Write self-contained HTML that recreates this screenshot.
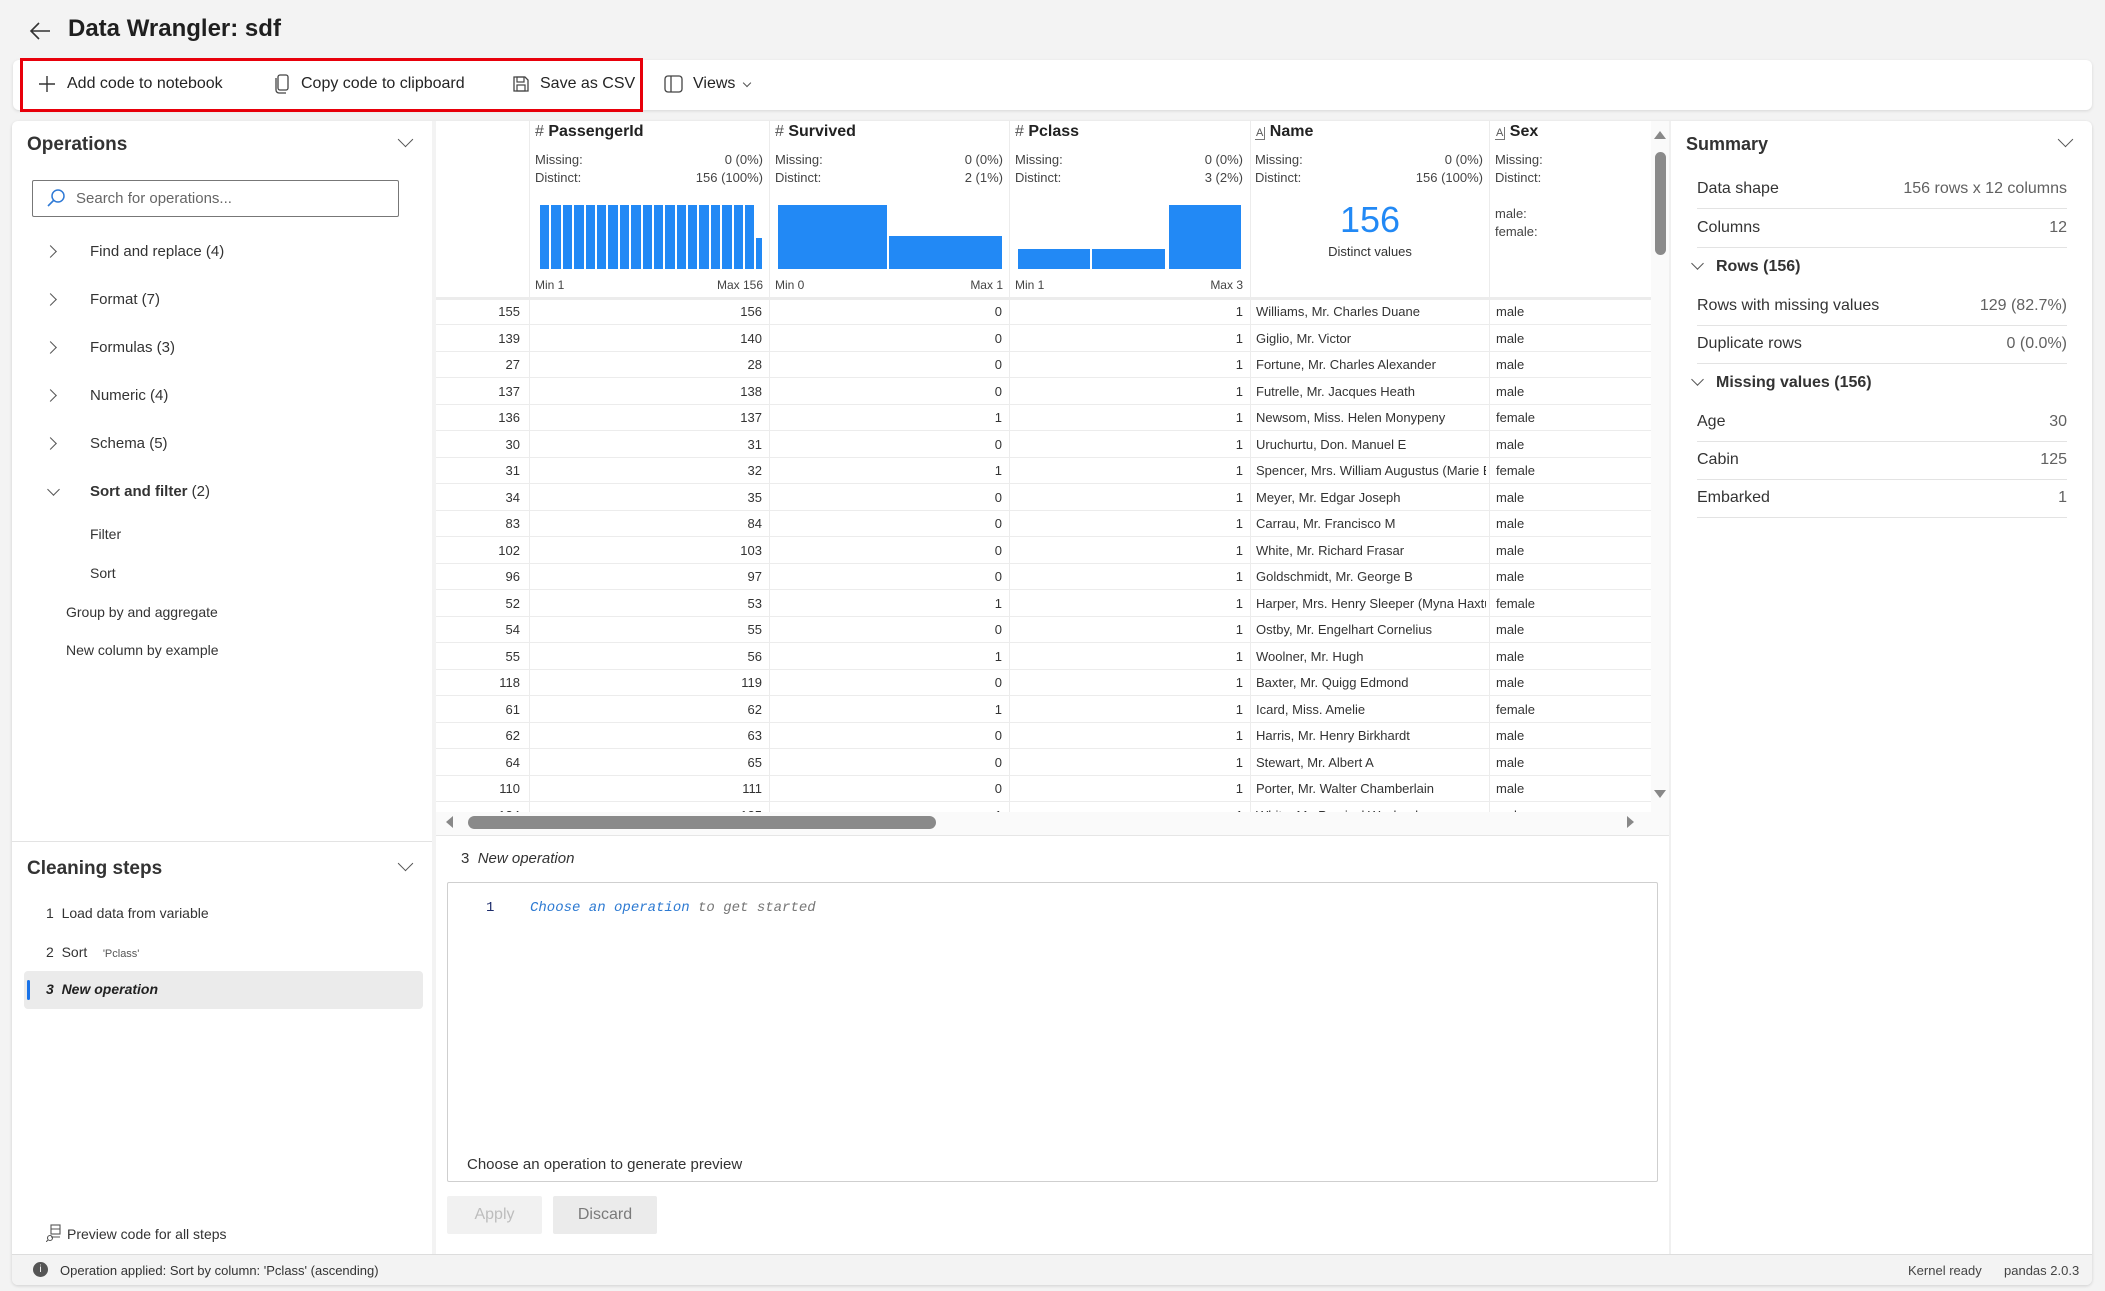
<!DOCTYPE html>
<html><head><meta charset="utf-8">
<style>
*{box-sizing:border-box;margin:0;padding:0}
body{width:2105px;height:1291px;background:#f3f3f3;font-family:"Liberation Sans",sans-serif;color:#242424;position:relative;overflow:hidden}
.a{position:absolute;white-space:nowrap}
.panel{position:absolute;background:#fff}
.chev{position:absolute;width:12px;height:12px;border-right:1.6px solid #555;border-bottom:1.6px solid #555}
.tb{font-size:16px;top:75px;color:#242424}
.op{font-size:15px;color:#333}
.hd{font-size:16px;font-weight:bold;color:#222}
.st{font-size:13px;color:#444}
.cell{position:absolute;font-size:13px;color:#333;white-space:nowrap;overflow:hidden}
.bar{position:absolute;background:#2289f5;bottom:0}
.sl{position:absolute;left:1697px;width:370px;font-size:16px;color:#333}
.sl span{position:absolute;right:0;color:#616161}
.sl::after{content:"";position:absolute;left:0;right:0;top:28px;border-bottom:1px solid #e3e3e3}
</style></head><body>
<svg class="a" style="left:28px;top:20px" width="24" height="22" viewBox="0 0 24 22"><path d="M22 11H3M11 3L3 11l8 8" stroke="#333" stroke-width="1.6" fill="none"/></svg>
<div class="a" style="left:68px;top:15px;font-size:24px;font-weight:bold;color:#1f1f1f">Data Wrangler: sdf</div>

<div class="panel" style="left:13px;top:60px;width:2079px;height:50px;border-radius:6px;box-shadow:0 1px 3px rgba(0,0,0,.12)"></div>
<div class="a" style="left:20px;top:58px;width:623px;height:54px;border:3px solid #e8000b"></div>
<svg class="a" style="left:38px;top:75px" width="18" height="18"><path d="M9 1v16M1 9h16" stroke="#333" stroke-width="1.4"/></svg>
<div class="a tb" style="left:67px">Add code to notebook</div>
<svg class="a" style="left:274px;top:74px" width="16" height="20"><rect x="4" y="1" width="10" height="15" rx="2" fill="none" stroke="#444" stroke-width="1.3"/><path d="M2 4v12a3 3 0 0 0 3 3h7" fill="none" stroke="#444" stroke-width="1.3"/></svg>
<div class="a tb" style="left:301px">Copy code to clipboard</div>
<svg class="a" style="left:512px;top:75px" width="18" height="18"><path d="M2 2h11l3 3v11H2z" fill="none" stroke="#444" stroke-width="1.3"/><rect x="5" y="2" width="7" height="5" fill="none" stroke="#444" stroke-width="1.2"/><rect x="5" y="10" width="8" height="6" fill="none" stroke="#444" stroke-width="1.2"/></svg>
<div class="a tb" style="left:540px">Save as CSV</div>
<svg class="a" style="left:664px;top:75px" width="19" height="18"><rect x="1" y="1" width="17" height="16" rx="3" fill="none" stroke="#444" stroke-width="1.3"/><path d="M7 1v16" stroke="#444" stroke-width="1.3"/></svg>
<div class="a tb" style="left:693px">Views</div>
<div class="chev" style="left:744px;top:80px;width:6px;height:6px;transform:rotate(45deg);border-width:1.2px"></div>

<div class="panel" style="left:12px;top:121px;width:2080px;height:1164px;border-radius:6px;box-shadow:0 1px 3px rgba(0,0,0,.15)"></div>
<div class="a" style="left:432px;top:121px;width:4px;height:1134px;background:#f3f3f3"></div>
<div class="a" style="left:1669px;top:121px;width:2px;height:1134px;background:#f0f0f0"></div>

<div class="a" style="left:27px;top:134px;font-size:19px;font-weight:bold;color:#333">Operations</div>
<div class="chev" style="left:400px;top:134px;transform:rotate(45deg);width:11px;height:11px"></div>
<div class="a" style="left:32px;top:180px;width:367px;height:37px;border:1.5px solid #777;border-radius:2px"></div>
<svg class="a" style="left:46px;top:188px" width="20" height="20"><circle cx="12" cy="8" r="6" fill="none" stroke="#2f7ad6" stroke-width="1.5"/><path d="M8 12L2 18" stroke="#2f7ad6" stroke-width="1.6"/></svg>
<div class="a" style="left:76px;top:190px;font-size:15px;color:#666">Search for operations...</div>

<div class="chev" style="left:46px;top:247px;transform:rotate(-45deg);width:9px;height:9px"></div>
<div class="a op" style="left:90px;top:243px">Find and replace (4)</div>
<div class="chev" style="left:46px;top:295px;transform:rotate(-45deg);width:9px;height:9px"></div>
<div class="a op" style="left:90px;top:291px">Format (7)</div>
<div class="chev" style="left:46px;top:343px;transform:rotate(-45deg);width:9px;height:9px"></div>
<div class="a op" style="left:90px;top:339px">Formulas (3)</div>
<div class="chev" style="left:46px;top:391px;transform:rotate(-45deg);width:9px;height:9px"></div>
<div class="a op" style="left:90px;top:387px">Numeric (4)</div>
<div class="chev" style="left:46px;top:439px;transform:rotate(-45deg);width:9px;height:9px"></div>
<div class="a op" style="left:90px;top:435px">Schema (5)</div>
<div class="chev" style="left:49px;top:485px;transform:rotate(45deg);width:9px;height:9px"></div>
<div class="a op" style="left:90px;top:483px"><b>Sort and filter</b> (2)</div>
<div class="a op" style="left:90px;top:526px;font-size:14px">Filter</div>
<div class="a op" style="left:90px;top:565px;font-size:14px">Sort</div>
<div class="a op" style="left:66px;top:604px;font-size:14px">Group by and aggregate</div>
<div class="a op" style="left:66px;top:642px;font-size:14px">New column by example</div>

<div class="a" style="left:12px;top:841px;width:420px;height:1px;background:#e3e3e3"></div>
<div class="a" style="left:27px;top:858px;font-size:19px;font-weight:bold;color:#333">Cleaning steps</div>
<div class="chev" style="left:400px;top:858px;transform:rotate(45deg);width:11px;height:11px"></div>
<div class="a op" style="left:46px;top:905px;font-size:14px">1&nbsp;&nbsp;Load data from variable</div>
<div class="a op" style="left:46px;top:944px;font-size:14px">2&nbsp;&nbsp;Sort&nbsp;&nbsp;&nbsp;&nbsp;<span style="font-size:11px;color:#555">'Pclass'</span></div>
<div class="a" style="left:24px;top:971px;width:399px;height:38px;background:#ebebeb;border-radius:4px"></div>
<div class="a" style="left:27px;top:980px;width:3px;height:20px;background:#1a73e8;border-radius:2px"></div>
<div class="a op" style="left:46px;top:981px;font-size:14px;font-weight:bold;font-style:italic;color:#222">3&nbsp;&nbsp;New operation</div>
<svg class="a" style="left:46px;top:1224px" width="16" height="18"><rect x="5" y="1" width="9" height="9" fill="none" stroke="#555" stroke-width="1.1"/><path d="M5 5h9M5 13h9" stroke="#555" stroke-width="1.1"/><circle cx="4" cy="14" r="2.5" fill="none" stroke="#555" stroke-width="1.1"/><path d="M2 16l-2 2" stroke="#555"/></svg>
<div class="a op" style="left:67px;top:1226px;font-size:14px">Preview code for all steps</div>

<div class="a" style="left:12px;top:1254px;width:2080px;height:31px;background:#f3f3f3;border-top:1px solid #ddd;border-radius:0 0 6px 6px"></div>
<div class="a" style="left:33px;top:1262px;width:15px;height:15px;border-radius:50%;background:#555;color:#fff;font-size:10px;text-align:center;line-height:15px">i</div>
<div class="a" style="left:60px;top:1263px;font-size:13px;color:#333">Operation applied: Sort by column: 'Pclass' (ascending)</div>
<div class="a" style="left:1908px;top:1263px;font-size:13px;color:#444">Kernel ready</div>
<div class="a" style="left:2004px;top:1263px;font-size:13px;color:#444">pandas 2.0.3</div>

<div class="a" style="left:436px;top:297px;width:1215px;height:3px;background:#ececec"></div>
<div class="a" style="left:529px;top:121px;width:1px;height:691px;background:#ececec"></div>
<div class="a" style="left:769px;top:121px;width:1px;height:691px;background:#ececec"></div>
<div class="a" style="left:1009px;top:121px;width:1px;height:691px;background:#ececec"></div>
<div class="a" style="left:1250px;top:121px;width:1px;height:691px;background:#ececec"></div>
<div class="a" style="left:1489px;top:121px;width:1px;height:691px;background:#ececec"></div>

<div class="a hd" style="left:535px;top:123px"><span style="font-weight:normal;color:#555">#</span>&nbsp;PassengerId</div>
<div class="a hd" style="left:775px;top:123px"><span style="font-weight:normal;color:#555">#</span>&nbsp;Survived</div>
<div class="a hd" style="left:1015px;top:123px"><span style="font-weight:normal;color:#555">#</span>&nbsp;Pclass</div>
<div class="a hd" style="left:1255px;top:123px"><span style="font-weight:normal;font-size:11px;color:#555;border:1px solid #777;border-top:none;border-left:none;padding:0 1px">A</span>&nbsp;Name</div>
<div class="a hd" style="left:1495px;top:123px"><span style="font-weight:normal;font-size:11px;color:#555;border:1px solid #777;border-top:none;border-left:none;padding:0 1px">A</span>&nbsp;Sex</div>

<div class="a st" style="left:535px;top:152px;width:228px">Missing:<span style="position:absolute;right:0">0 (0%)</span></div>
<div class="a st" style="left:535px;top:170px;width:228px">Distinct:<span style="position:absolute;right:0">156 (100%)</span></div>
<div class="a st" style="left:775px;top:152px;width:228px">Missing:<span style="position:absolute;right:0">0 (0%)</span></div>
<div class="a st" style="left:775px;top:170px;width:228px">Distinct:<span style="position:absolute;right:0">2 (1%)</span></div>
<div class="a st" style="left:1015px;top:152px;width:228px">Missing:<span style="position:absolute;right:0">0 (0%)</span></div>
<div class="a st" style="left:1015px;top:170px;width:228px">Distinct:<span style="position:absolute;right:0">3 (2%)</span></div>
<div class="a st" style="left:1255px;top:152px;width:228px">Missing:<span style="position:absolute;right:0">0 (0%)</span></div>
<div class="a st" style="left:1255px;top:170px;width:228px">Distinct:<span style="position:absolute;right:0">156 (100%)</span></div>
<div class="a st" style="left:1495px;top:152px">Missing:</div>
<div class="a st" style="left:1495px;top:170px">Distinct:</div>
<div class="a st" style="left:1495px;top:206px">male:</div>
<div class="a st" style="left:1495px;top:224px">female:</div>

<div class="a" style="left:540px;top:205px;width:222px;height:64px;display:flex;gap:2px;align-items:flex-end">
<div style="flex:1;height:100%;background:#2289f5"></div><div style="flex:1;height:100%;background:#2289f5"></div><div style="flex:1;height:100%;background:#2289f5"></div><div style="flex:1;height:100%;background:#2289f5"></div><div style="flex:1;height:100%;background:#2289f5"></div><div style="flex:1;height:100%;background:#2289f5"></div><div style="flex:1;height:100%;background:#2289f5"></div><div style="flex:1;height:100%;background:#2289f5"></div><div style="flex:1;height:100%;background:#2289f5"></div><div style="flex:1;height:100%;background:#2289f5"></div><div style="flex:1;height:100%;background:#2289f5"></div><div style="flex:1;height:100%;background:#2289f5"></div><div style="flex:1;height:100%;background:#2289f5"></div><div style="flex:1;height:100%;background:#2289f5"></div><div style="flex:1;height:100%;background:#2289f5"></div><div style="flex:1;height:100%;background:#2289f5"></div><div style="flex:1;height:100%;background:#2289f5"></div><div style="flex:1;height:100%;background:#2289f5"></div><div style="flex:1;height:100%;background:#2289f5"></div><div style="flex:.6;height:48%;background:#2289f5"></div>
</div>
<div class="a" style="left:778px;top:205px;width:225px;height:64px">
<div class="bar" style="left:0;width:109px;height:64px"></div><div class="bar" style="left:111px;width:113px;height:33px"></div></div>
<div class="a" style="left:1018px;top:205px;width:225px;height:64px">
<div class="bar" style="left:0;width:72px;height:20px"></div><div class="bar" style="left:74px;width:73px;height:20px"></div><div class="bar" style="left:151px;width:72px;height:64px"></div></div>
<div class="a" style="left:1251px;top:199px;width:238px;text-align:center;font-size:36px;color:#2289f5">156</div>
<div class="a" style="left:1251px;top:244px;width:238px;text-align:center;font-size:13px;color:#333">Distinct values</div>

<div class="a st" style="left:535px;top:278px;width:228px;font-size:12px">Min 1<span style="position:absolute;right:0">Max 156</span></div>
<div class="a st" style="left:775px;top:278px;width:228px;font-size:12px">Min 0<span style="position:absolute;right:0">Max 1</span></div>
<div class="a st" style="left:1015px;top:278px;width:228px;font-size:12px">Min 1<span style="position:absolute;right:0">Max 3</span></div>

<div class="a" style="left:436px;top:299px;width:1215px;height:513px;overflow:hidden">
<div style="position:relative">
<script>
var d=[[155,156,0,1,"Williams, Mr. Charles Duane","male"],[139,140,0,1,"Giglio, Mr. Victor","male"],[27,28,0,1,"Fortune, Mr. Charles Alexander","male"],[137,138,0,1,"Futrelle, Mr. Jacques Heath","male"],[136,137,1,1,"Newsom, Miss. Helen Monypeny","female"],[30,31,0,1,"Uruchurtu, Don. Manuel E","male"],[31,32,1,1,"Spencer, Mrs. William Augustus (Marie Eugenie)","female"],[34,35,0,1,"Meyer, Mr. Edgar Joseph","male"],[83,84,0,1,"Carrau, Mr. Francisco M","male"],[102,103,0,1,"White, Mr. Richard Frasar","male"],[96,97,0,1,"Goldschmidt, Mr. George B","male"],[52,53,1,1,"Harper, Mrs. Henry Sleeper (Myna Haxtun)","female"],[54,55,0,1,"Ostby, Mr. Engelhart Cornelius","male"],[55,56,1,1,"Woolner, Mr. Hugh","male"],[118,119,0,1,"Baxter, Mr. Quigg Edmond","male"],[61,62,1,1,"Icard, Miss. Amelie","female"],[62,63,0,1,"Harris, Mr. Henry Birkhardt","male"],[64,65,0,1,"Stewart, Mr. Albert A","male"],[110,111,0,1,"Porter, Mr. Walter Chamberlain","male"],[124,125,1,1,"White, Mr. Percival Wayland","male"]];
var h="";for(var i=0;i<d.length;i++){var t=i*26.5+5;var r=d[i];
h+='<div class="cell" style="left:0;width:84px;top:'+t+'px;text-align:right;color:#333">'+r[0]+'</div>';
h+='<div class="cell" style="left:94px;width:232px;top:'+t+'px;text-align:right">'+r[1]+'</div>';
h+='<div class="cell" style="left:334px;width:232px;top:'+t+'px;text-align:right">'+r[2]+'</div>';
h+='<div class="cell" style="left:574px;width:233px;top:'+t+'px;text-align:right">'+r[3]+'</div>';
h+='<div class="cell" style="left:820px;width:230px;top:'+t+'px">'+r[4]+'</div>';
h+='<div class="cell" style="left:1060px;width:150px;top:'+t+'px">'+r[5]+'</div>';
h+='<div style="position:absolute;left:0;width:1215px;top:'+(i*26.5+25)+'px;height:1px;background:#ececec"></div>';}
document.write(h);
</script>
</div></div>

<div class="a" style="left:436px;top:812px;width:1233px;height:23px;background:#fafafa"></div>
<div class="a" style="left:468px;top:816px;width:468px;height:13px;background:#8a8a8a;border-radius:7px"></div>
<div class="a" style="left:446px;top:816px;width:0;height:0;border:6px solid transparent;border-right:7px solid #888;border-left:none"></div>
<div class="a" style="left:1627px;top:816px;width:0;height:0;border:6px solid transparent;border-left:7px solid #888;border-right:none"></div>
<div class="a" style="left:1651px;top:121px;width:18px;height:691px;background:#fafafa"></div>
<div class="a" style="left:1655px;top:152px;width:11px;height:103px;background:#8a8a8a;border-radius:6px"></div>
<div class="a" style="left:1654px;top:131px;width:0;height:0;border:6px solid transparent;border-bottom:8px solid #888;border-top:none"></div>
<div class="a" style="left:1654px;top:790px;width:0;height:0;border:6px solid transparent;border-top:8px solid #888;border-bottom:none"></div>
<div class="a" style="left:436px;top:835px;width:1233px;height:1px;background:#e6e6e6"></div>

<div class="a" style="left:461px;top:850px;font-size:15px;color:#333">3&nbsp;&nbsp;<i>New operation</i></div>
<div class="a" style="left:447px;top:882px;width:1211px;height:300px;border:1px solid #cfcfcf;border-radius:2px"></div>
<div class="a" style="left:486px;top:900px;font-family:'Liberation Mono',monospace;font-size:14px;color:#1d2c6b">1</div>
<div class="a" style="left:530px;top:900px;font-family:'Liberation Mono',monospace;font-size:14px;font-style:italic;color:#2d7ad2">Choose an operation <span style="color:#777">to get started</span></div>
<div class="a" style="left:467px;top:1156px;font-size:15px;color:#333">Choose an operation to generate preview</div>
<div class="a" style="left:447px;top:1196px;width:95px;height:38px;background:#f1f1f1;border-radius:2px;color:#bdbdbd;font-size:16px;text-align:center;line-height:38px">Apply</div>
<div class="a" style="left:553px;top:1196px;width:104px;height:38px;background:#ebebeb;border-radius:2px;color:#7a7a7a;font-size:16px;text-align:center;line-height:38px">Discard</div>

<div class="a" style="left:1686px;top:134px;font-size:18px;font-weight:bold;color:#333">Summary</div>
<div class="chev" style="left:2060px;top:134px;transform:rotate(45deg);width:11px;height:11px"></div>
<div class="a sl" style="top:180px">Data shape<span>156 rows x 12 columns</span></div>
<div class="a sl" style="top:219px">Columns<span>12</span></div>
<div class="chev" style="left:1693px;top:259px;transform:rotate(45deg);width:9px;height:9px"></div>
<div class="a" style="left:1716px;top:258px;font-size:16px;font-weight:bold;color:#333">Rows (156)</div>
<div class="a sl" style="top:297px">Rows with missing values<span>129 (82.7%)</span></div>
<div class="a sl" style="top:335px">Duplicate rows<span>0 (0.0%)</span></div>
<div class="chev" style="left:1693px;top:375px;transform:rotate(45deg);width:9px;height:9px"></div>
<div class="a" style="left:1716px;top:374px;font-size:16px;font-weight:bold;color:#333">Missing values (156)</div>
<div class="a sl" style="top:413px">Age<span>30</span></div>
<div class="a sl" style="top:451px">Cabin<span>125</span></div>
<div class="a sl" style="top:489px">Embarked<span>1</span></div>
</body></html>
